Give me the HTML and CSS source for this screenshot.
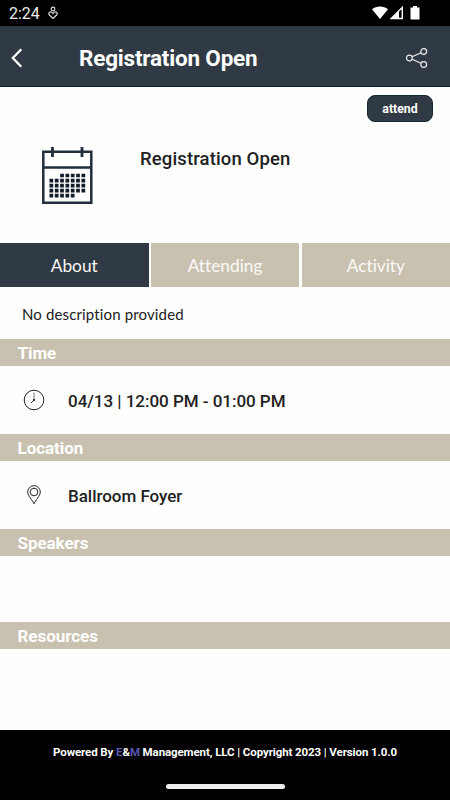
FILE: index.html
```html
<!DOCTYPE html>
<html lang="en">
<head>
<meta charset="utf-8">
<meta name="viewport" content="width=device-width, initial-scale=1">
<title>Registration Open</title>
<link rel="stylesheet" href="styles.css">
</head>
<body>
<div class="app">
  <div class="status">
    <span class="clock">2:24</span>
    <svg class="status-note" width="10" height="14" viewBox="0 0 10 14" fill="none" stroke="#ddd" stroke-width="1.2">
      <circle cx="5" cy="3" r="1.8"/>
      <path d="M5 12.400 1.400 9a2 2 0 0 1 0-2.600C2.600 5.400 4 5.900 5 7.500 6 5.900 7.400 5.400 8.600 6.400a2 2 0 0 1 0 2.600Z"/>
    </svg>
    <svg class="status-icons" width="50" height="16" viewBox="0 0 50 16" fill="#fff">
      <path d="M0 4.200C4.500.700 11.500.700 16 4.200L8 14Z"/>
      <path fill-rule="evenodd" d="M17.500 14.200 31 .8v13.400ZM27 6.500v6.200h2.600V4.300Z"/>
      <path d="M41 1h4v1.500h2.500V14.600h-9V2.500H41Z"/>
    </svg>
  </div>
  <header class="header">
    <svg class="back" width="12" height="20" viewBox="0 0 12 20" fill="none" stroke="#fff" stroke-width="2.300"><path d="M10.300 1.300 1.800 10l8.500 8.700"/></svg>
    <h1 class="title">Registration Open</h1>
    <svg class="share" width="22" height="20" viewBox="0 0 22 20" fill="none" stroke="#eee" stroke-width="1.150">
      <circle cx="3.400" cy="10" r="2.900"/><circle cx="17.700" cy="3.500" r="2.900"/><circle cx="17.700" cy="16.500" r="2.900"/>
      <path d="m6 8.800 9.100-4.100M6 11.200l9.100 4.100"/>
    </svg>
  </header>
  <section class="hero">
    <button class="attend">attend</button>
    <svg class="calendar" width="52" height="59" viewBox="0 1 52 59" fill="none" stroke="#202e3e">
      <path stroke-width="2.500" d="M2.300 5.800h48v50.900h-48ZM2.300 21.500h48"/>
      <path stroke-width="2.800" d="M11.500 1v10M41 1v10"/>
      <g stroke="#101c28" stroke-width="3.700" stroke-dasharray="3.700 1.630">
        <path d="M19.200 29.500H44.500M8.500 34.600H44.500M8.500 39.600H44.500M8.500 44.700H44.500M8.500 49.700H34"/>
      </g>
    </svg>
    <h2 class="event">Registration Open</h2>
  </section>
  <nav class="tabs">
    <div class="tab active">About</div>
    <div class="tab">Attending</div>
    <div class="tab">Activity</div>
  </nav>
  <p class="description">No description provided</p>
  <h3 class="bar">Time</h3>
  <div class="row">
    <svg class="row-icon" width="22" height="22" viewBox="0 0 22 22" fill="none" stroke="#222" stroke-width="1">
      <circle cx="11" cy="11" r="9.800"/><path stroke="#777" d="M11 3.500V11"/><path d="M11 11l-3 3"/><circle cx="11" cy="11" r=".7" fill="#111"/>
    </svg>
    <span class="when">04/13 | 12:00 PM - 01:00 PM</span>
  </div>
  <h3 class="bar">Location</h3>
  <div class="row">
    <svg class="row-icon" width="22" height="22" viewBox="0 0 22 22" fill="none" stroke="#222" stroke-width="1">
      <path d="M11 19.800C9.500 16 4.700 12 4.700 8a6.300 6.300 0 0 1 12.600 0c0 4-4.800 8-6.300 11.800Z"/><circle cx="11" cy="8" r="3.800"/>
    </svg>
    <span class="place">Ballroom Foyer</span>
  </div>
  <h3 class="bar">Speakers</h3>
  <div class="empty"></div>
  <h3 class="bar">Resources</h3>
  <footer class="footer">
    <p class="credit">Powered By <span class="brand">E</span>&amp;<span class="brand">M</span> Management, LLC | Copyright 2023 | Version 1.0.0</p>
    <div class="handle"></div>
  </footer>
</div>
</body>
</html>
```
FILE: styles.css
```css
* { box-sizing: border-box; margin: 0; padding: 0; }
body { background: #fefefe; font-family: Roboto, sans-serif; color: #212121; }
svg { display: block; flex: none; }
.app { width: 450px; height: 800px; display: flex; flex-direction: column; overflow: hidden; white-space: nowrap; }
.status { height: 26px; background: #000; display: flex; align-items: center; padding: 0 28px 0 9px; color: #eee; flex: none; }
.clock { font-size: 16px; width: 39px; line-height: 26px; padding-top: 2px; }
.status-icons { margin-left: auto; }
.header { height: 61px; background: #303a44; border-bottom: 1px solid #10202f; display: flex; align-items: center; padding: 3px 22px 0 11px; flex: none; }
.title { font-size: 22.500px; font-weight: 700; letter-spacing: -.2px; line-height: 30px; color: #fff; margin-left: 56px; }
.share { margin-left: auto; }
.hero { height: 156px; display: grid; grid-template-columns: 99px 1fr; grid-template-rows: 52px 1fr; padding: 8px 17px 0 41px; flex: none; }
.attend { grid-column: 1 / 3; justify-self: end; width: 66px; height: 27px; border: 1px solid #172838; border-radius: 8px; background: #303a44; color: #fff; font: 700 12.300px Roboto, sans-serif; }
.event { font-size: 18.500px; font-weight: 500; letter-spacing: .13px; line-height: 24px; }
.tabs { height: 43.500px; display: grid; grid-template-columns: 148.500px 148.500px 148.500px; grid-template-rows: 43.500px; gap: 2.300px; flex: none; }
.tab { background: #c9c1af; color: #fbfaf8; font: 17.300px/46px Lato, sans-serif; font-variant-ligatures: none; text-align: center; }
.active { background: #303a44; }
.description { height: 52.500px; flex: none; padding-left: 22px; font: 15px/54px Lato, sans-serif; letter-spacing: .14px; font-variant-ligatures: none; }
.bar { height: 27px; flex: none; background: #c9c1af; color: #fff; padding-left: 17.500px; font-size: 17px; font-weight: 700; letter-spacing: -.05px; line-height: 29px; }
.row { height: 68px; flex: none; display: flex; align-items: center; padding-left: 23px; gap: 23px; }
.when, .place { font-size: 17px; font-weight: 500; line-height: 24px; padding-top: 2px; letter-spacing: -.03px; }
.empty { height: 66px; flex: none; }
.footer { height: 70px; margin-top: auto; background: #000; color: #fff; text-align: center; padding-top: 13px; flex: none; }
.credit { font-size: 11.500px; font-weight: 700; letter-spacing: -.1px; line-height: 18px; }
.brand { color: #5856b5; }
.handle { width: 119px; height: 5px; border-radius: 3px; background: #eee; margin: 23px auto 0; }
```
